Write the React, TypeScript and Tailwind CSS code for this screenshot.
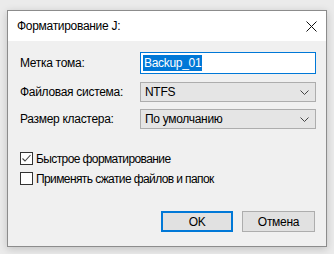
import React from "react";

const Chevron = () => (
    <svg width="9" height="5" viewBox="0 0 9 5" className="shrink-0">
        <polyline points="0.5,0.5 4.5,4.5 8.5,0.5" fill="none" stroke="#444" strokeWidth="1" />
    </svg>
);

const Combo = ({ value }: { value: string }) => (
    <div className="h-[20px] w-[176px] border border-[#adadad] bg-[#e5e5e5] flex items-center justify-between pl-[4px] pr-[6px]">
        <span>{value}</span>
        <Chevron />
    </div>
);

const CheckBox = ({ checked, label }: { checked: boolean; label: string }) => (
    <div className="flex items-center h-[13px]">
        <div className="w-[13px] h-[13px] border border-[#333] bg-white flex items-center justify-center shrink-0">
            {checked && (
                <svg width="11" height="11" viewBox="0 0 11 11">
                    <polyline points="1.5,5.5 4,8 9.5,2" fill="none" stroke="#444" strokeWidth="1.1" />
                </svg>
            )}
        </div>
        <span className="ml-[3px] tracking-[-0.6px] whitespace-nowrap">{label}</span>
    </div>
);

export default function App() {
    return (
        <div
            className="w-[334px] h-[254px] bg-[#ebebeb] pt-[10px] pl-[7px] text-[12px] text-black tracking-[-0.3px]"
            style={{ fontFamily: '"Liberation Sans", Arial, sans-serif' }}
        >
            <div className="w-[320px] h-[237px] border border-[#8c8c8c] flex flex-col shadow-[0_2px_8px_rgba(0,0,0,0.18)]">
                {/* title bar */}
                <div className="h-[30px] bg-white flex items-center justify-between pl-[9px] pr-[9px]">
                    <span>Форматирование J:</span>
                    <svg width="11" height="11" viewBox="0 0 11 11">
                        <path d="M0.5 0.5 L10.5 10.5 M10.5 0.5 L0.5 10.5" stroke="#111" strokeWidth="1" />
                    </svg>
                </div>

                <div className="flex-1 bg-[#f0f0f0] pl-[12px] pr-[10px] pt-[11px] flex flex-col">
                    <div className="flex items-center justify-between">
                        <span>Метка тома:</span>
                        <div className="h-[22px] w-[176px] border border-[#0078d7] bg-white flex items-center pl-[2px]">
                            <span className="bg-[#0078d7] text-white px-[1px] leading-[16px]">Backup_01</span>
                        </div>
                    </div>
                    <div className="flex items-center justify-between mt-[8px]">
                        <span>Файловая система:</span>
                        <Combo value="NTFS" />
                    </div>
                    <div className="flex items-center justify-between mt-[7px]">
                        <span>Размер кластера:</span>
                        <Combo value="По умолчанию" />
                    </div>

                    <div className="mt-[23px] flex flex-col gap-[7px]">
                        <CheckBox checked label="Быстрое форматирование" />
                        <CheckBox checked={false} label="Применять сжатие файлов и папок" />
                    </div>

                    <div className="mt-[26px] flex justify-end gap-[9px] pr-[1px]">
                        <button className="w-[72px] h-[21px] border-2 border-[#0078d7] bg-[#e1e1e1] flex items-center justify-center">
                            OK
                        </button>
                        <button className="w-[73px] h-[21px] border border-[#adadad] bg-[#e1e1e1] flex items-center justify-center">
                            Отмена
                        </button>
                    </div>
                </div>
            </div>
        </div>
    );
}
